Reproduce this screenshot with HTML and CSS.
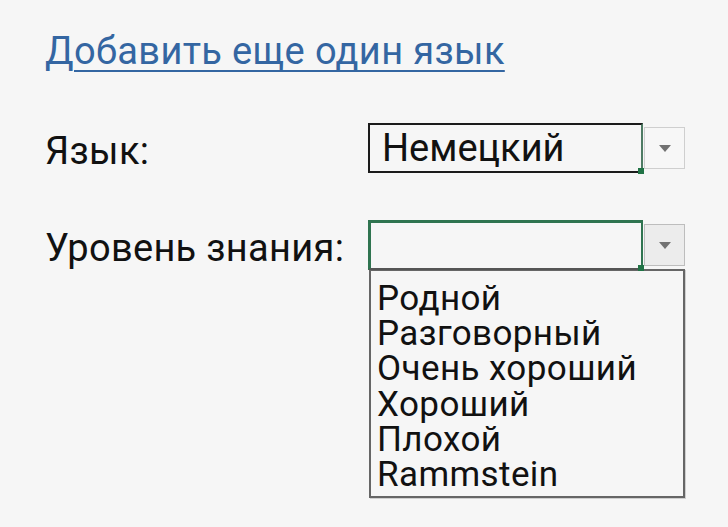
FILE: index.html
```html
<!DOCTYPE html>
<html lang="ru">
<head>
<meta charset="utf-8">
<link rel="stylesheet" href="styles.css">
</head>
<body>
<div class="page">
  <a class="add-link" href="#">Добавить еще один язык</a>
  <div class="row row-lang">
    <div class="label">Язык:</div>
    <div class="combo">
      <div class="field field-black">Немецкий<span class="handle"></span></div>
      <div class="btn btn-plain"><span class="arrow"></span></div>
    </div>
  </div>
  <div class="row row-level">
    <div class="label">Уровень знания:</div>
    <div class="combo-wrap">
      <div class="combo">
        <div class="field field-green"><span class="handle"></span></div>
        <div class="btn btn-grey"><span class="arrow"></span></div>
      </div>
      <ul class="list">
        <li>Родной</li>
        <li>Разговорный</li>
        <li>Очень хороший</li>
        <li>Хороший</li>
        <li>Плохой</li>
        <li>Rammstein</li>
      </ul>
    </div>
  </div>
</div>
</body>
</html>
```
FILE: styles.css
```css
html, body {
  margin: 0;
  padding: 0;
  background: #f6f6f6;
}
body {
  font-family: Roboto, "Noto Sans", sans-serif;
  color: #111;
  width: 728px;
  height: 527px;
  overflow: hidden;
}
.page {
  padding: 28px 0 0 45px;
  display: flex;
  flex-direction: column;
}
.add-link {
  font-size: 38px;
  letter-spacing: 0.35px;
  line-height: 46px;
  color: #3466a2;
  text-decoration: underline;
  text-decoration-thickness: 2px;
  text-underline-offset: 6px;
  align-self: flex-start;
}
.row {
  display: flex;
  align-items: flex-start;
}
.row-lang {
  margin-top: 49px;
}
.row-level {
  margin-top: 41px;
}
.label {
  width: 323px;
  font-size: 38px;
  letter-spacing: 0.3px;
  line-height: 56px;
  color: #111;
}
.combo {
  display: flex;
  align-items: center;
}
.field {
  position: relative;
  box-sizing: border-box;
  width: 275px;
  height: 50px;
  font-size: 38px;
  line-height: 46px;
  padding-left: 12px;
  color: #111;
}
.field-black {
  border: 2px solid #1b1b1b;
  border-right: 2px solid #4e7b64;
}
.field-green {
  border: 3px solid #2f7450;
  border-bottom: 2px solid #555;
  border-right: 2px solid #2f7450;
}
.handle {
  position: absolute;
  right: -3px;
  bottom: -3px;
  width: 6px;
  height: 6px;
  background: #217346;
}
.btn {
  box-sizing: border-box;
  width: 41px;
  height: 42px;
  border: 1px solid #cfcfcf;
  display: flex;
  align-items: center;
  justify-content: center;
  margin-left: 1px;
}
.btn-plain {
  background: #f7f7f7;
}
.btn-grey {
  background: #ececec;
  border-color: #bdbdbd;
}
.arrow {
  width: 0;
  height: 0;
  border-left: 6px solid transparent;
  border-right: 6px solid transparent;
  border-top: 7px solid #727272;
}
.combo-wrap {
  display: flex;
  flex-direction: column;
}
.list {
  list-style: none;
  margin: -1px 0 0 1px;
  padding: 10px 0 4px 6px;
  box-sizing: border-box;
  width: 316px;
  border: 2px solid #666;
  box-shadow: 1px 1px 0 #cfcfcf;
  background: #f6f6f6;
}
.list li {
  font-size: 35px;
  letter-spacing: 0.4px;
  line-height: 35.2px;
  color: #111;
}
```
